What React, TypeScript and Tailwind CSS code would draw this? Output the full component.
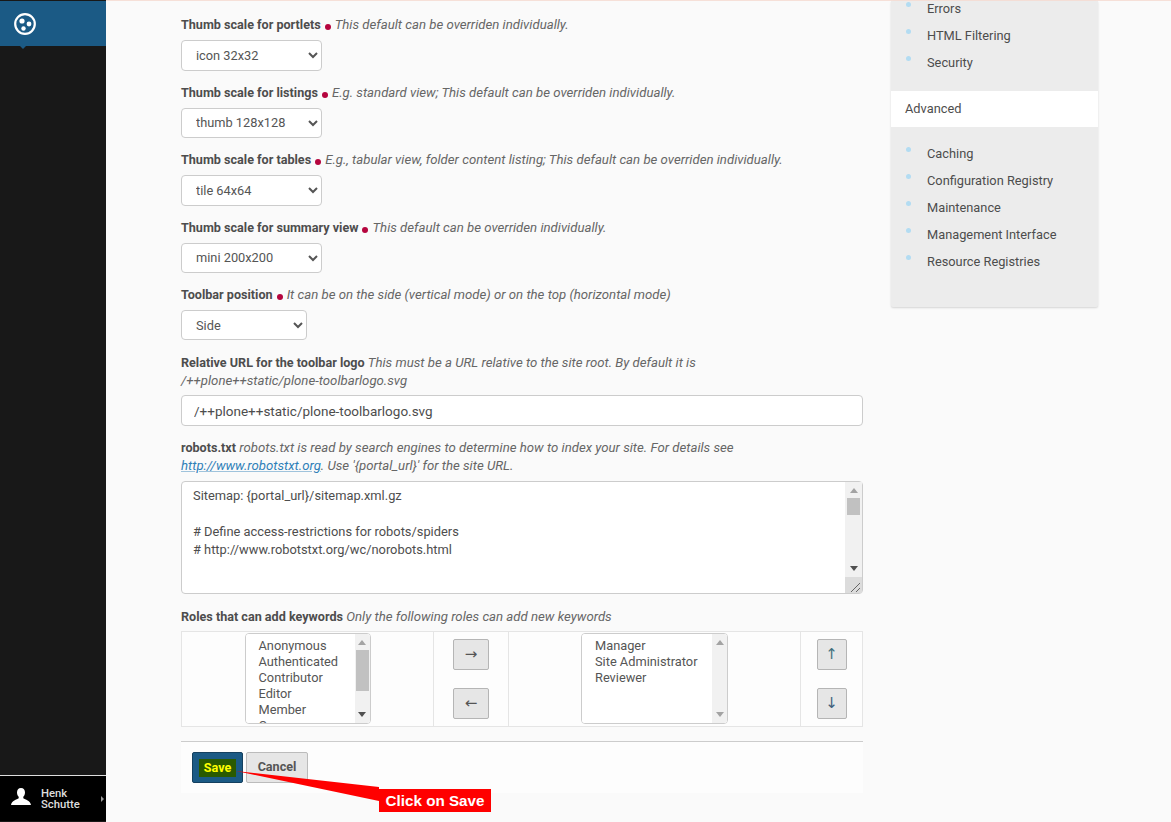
import React from 'react';

const robots = `Sitemap: {portal_url}/sitemap.xml.gz

# Define access-restrictions for robots/spiders
# http://www.robotstxt.org/wc/norobots.html



# By default we allow robots to access all areas of our site
# already accessible to anonymous users`;

const Dot = () => <span className="inline-block w-[6px] h-[6px] rounded-full bg-[#b5053e] mx-[4px] align-[-1px]" />;

const Label = ({ children }: { children: React.ReactNode }) => (
  <b className="font-bold text-[12.6px] text-[#4d4d4d]">{children}</b>
);

const Help = ({ children }: { children: React.ReactNode }) => (
  <i className="font-normal text-[13.2px] text-[#666]">{children}</i>
);

const ThumbField = ({ label, help, value }: { label: string; help: string; value: string }) => (
  <div className="mt-[12px] first:mt-[14px]">
    <div className="h-[20px] leading-[20px]">
      <Label>{label}</Label>
      <Dot />
      <Help>{help}</Help>
    </div>
    <select
      defaultValue={value}
      className="block mt-[5px] w-[141px] h-[30.5px] px-[10px] bg-white border border-[#ccc] rounded-[4px] text-[12.8px] text-[#555]"
      style={{ appearance: 'auto' }}
    >
      <option>{value}</option>
    </select>
  </div>
);

const SideLink = ({ text }: { text: string }) => (
  <li className="relative h-[27px] leading-[27px] pl-[36px] text-[12.8px] text-[#4d4d4d]">
    <span className="absolute left-[15px] top-[7px] w-[5px] h-[5px] rounded-full bg-[#b3dcf2]" />
    {text}
  </li>
);

const ArrowButton = ({ children, w }: { children: React.ReactNode; w: string }) => (
  <button className={`${w} h-[31px] flex items-center justify-center bg-[#e6e6e6] border border-[#b5b5b5] rounded-[2px] text-[#555] text-[15px] font-['DejaVu_Sans',sans-serif]`}>
    {children}
  </button>
);

// scrollbars are hidden in the capture, so the visible ones are drawn over the fields
const FakeScrollbar = ({ thumb, dim, box }: { thumb?: string; dim?: boolean; box: string }) => (
  <div className={`absolute ${box} bg-[#f1f1f1] flex flex-col items-center justify-between py-[6px]`}>
    <span className="w-0 h-0 border-x-[4px] border-b-[5px] border-x-transparent border-b-[#a3a3a3]" />
    {thumb && <span className={`absolute bg-[#c1c1c1] ${thumb}`} />}
    <span className={`w-0 h-0 border-x-[4px] border-t-[5px] border-x-transparent ${dim ? 'border-t-[#a3a3a3]' : 'border-t-[#505050]'}`} />
  </div>
);

const roleOption = "h-[16px] min-h-[16px] leading-[16px] p-0";

export default function App() {
  return (
    <div className="relative flex h-[822px] w-[1171px] overflow-hidden bg-[#fafafa] font-['Roboto',sans-serif] text-[12.8px] text-[#4d4d4d]">
      {/* toolbar */}
      <aside className="w-[106px] flex flex-col bg-[#181818] shrink-0">
        <div className="relative mt-[1px] h-[45px] bg-[#1b5a85] flex items-center pl-[14px]">
          <svg width="22" height="22" viewBox="0 0 22 22">
            <circle cx="11" cy="11" r="9.8" fill="none" stroke="#fff" strokeWidth="2.2" />
            <circle cx="8" cy="8" r="2.6" fill="#fff" />
            <circle cx="15" cy="11" r="2.4" fill="#fff" />
            <circle cx="9.500" cy="15.500" r="2.200" fill="#fff" />
          </svg>
          <span className="absolute left-[20px] top-[45px] w-0 h-0 border-x-[3px] border-t-[3px] border-x-transparent border-t-[#1b5a85]" />
        </div>
        <div className="flex-1" />
        <div className="h-[46px] mb-[1px] flex items-center bg-black border-t border-[#ddd] text-white">
          <svg width="20" height="17" viewBox="0 0 20 17" className="ml-[11px] mt-[-4px]">
            <path d="M10 0C7.400 0 6 2 6 4.500c0 1.800.7 3.300 1.700 4.200v1.500C5.800 11.400 .6 12.600 0 17h20c-.6-4.400-5.800-5.600-7.700-6.800V8.700c1-.9 1.700-2.400 1.700-4.200C14 2 12.600 0 10 0z" fill="#fff" />
          </svg>
          <div className="ml-[10px] text-[11.3px] font-medium leading-[11px] w-[60px] text-[#ddd]">
            <div>Henk</div>
            <div>Schutte</div>
          </div>
          <span className="w-0 h-0 border-y-[3px] border-l-[3px] border-y-transparent border-l-[#999]" />
        </div>
      </aside>

      <div className="flex-1 flex flex-col">
        <div className="h-[1px] bg-[#f6e0d8]" />
        <div className="flex">
          {/* form */}
          <main className="ml-[75px] w-[682px] shrink-0">
            <ThumbField label="Thumb scale for portlets" help="This default can be overriden individually." value="icon 32x32" />
            <ThumbField label="Thumb scale for listings" help="E.g. standard view; This default can be overriden individually." value="thumb 128x128" />
            <ThumbField label="Thumb scale for tables" help="E.g., tabular view, folder content listing; This default can be overriden individually." value="tile 64x64" />
            <ThumbField label="Thumb scale for summary view" help="This default can be overriden individually." value="mini 200x200" />

            <div className="mt-[12px]">
              <div className="h-[20px] leading-[20px]">
                <Label>Toolbar position</Label>
                <Dot />
                <Help>It can be on the side (vertical mode) or on the top (horizontal mode)</Help>
              </div>
              <select className="block mt-[5px] w-[126px] h-[30px] px-[10px] bg-white border border-[#ccc] rounded-[4px] text-[12.8px] text-[#555]" style={{ appearance: 'auto' }}>
                <option>Side</option>
              </select>
            </div>

            <div className="mt-[14px] leading-[18px]">
              <Label>Relative URL for the toolbar logo</Label>{' '}
              <Help>This must be a URL relative to the site root. By default it is<br /><span className="whitespace-nowrap">/++plone++static/plone-toolbarlogo.svg</span></Help>
            </div>
            <input
              readOnly
              value="/++plone++static/plone-toolbarlogo.svg"
              className="block mt-[5px] w-full h-[31px] px-[12px] bg-white border border-[#ccc] rounded-[4px] text-[13.5px] text-[#4d4d4d]"
            />

            <div className="mt-[13px] leading-[18px]">
              <Label>robots.txt</Label>{' '}
              <Help>
                robots.txt is read by search engines to determine how to index your site. For details see<br />
                <a className="text-[#2f7fb8] underline decoration-[#9fc3dc]">http://www.robotstxt.org</a>. Use '{'{portal_url}'}' for the site URL.
              </Help>
            </div>
            <div className="relative mt-[6px] h-[113px]">
              <textarea
                readOnly
                value={robots}
                className="block w-full h-full px-[11px] py-[5px] bg-white border border-[#ccc] rounded-[4px] text-[12.85px] leading-[18px] text-[#4d4d4d] resize-none overflow-hidden"
              />
              <FakeScrollbar box="right-[1px] top-[1px] bottom-[17px] w-[17px]" thumb="left-[2px] right-[2px] top-[16px] h-[17px]" />
              <div className="absolute right-[1px] bottom-[1px] w-[17px] h-[16px] bg-[#dcdcdc] overflow-hidden">
                <svg width="17" height="16" viewBox="0 0 17 16">
                  <path d="M6 15 L15 6 M11 15 L15 11" stroke="#666" strokeWidth="1" />
                </svg>
              </div>
            </div>

            <div className="mt-[14px] h-[18px] leading-[18px]">
              <Label>Roles that can add keywords</Label>{' '}
              <Help>Only the following roles can add new keywords</Help>
            </div>

            <div className="mt-[5px] h-[96px] flex border border-[#e5e5e5] bg-[#fdfdfd]">
              <div className="w-[251px] flex justify-center">
                <div className="relative w-[126px] h-[91px] mt-[1px] overflow-hidden bg-white border border-[#ccc] rounded-[4px]">
                  <select multiple className="w-full h-[100px] pl-[13px] pr-0 pt-[4px] bg-white text-[12.8px] leading-[16px] text-[#555] overflow-hidden outline-none" style={{ appearance: 'auto' }}>
                    {['Anonymous', 'Authenticated', 'Contributor', 'Editor', 'Member', 'Owner', 'Reader', 'Site Administrator'].map(r => <option key={r} className={roleOption}>{r}</option>)}
                  </select>
                  <FakeScrollbar box="right-0 top-0 bottom-0 w-[15px]" thumb="left-[1px] right-[1px] top-[16px] h-[41px]" />
                </div>
              </div>
              <div className="w-[75px] border-l border-[#e5e5e5] flex flex-col items-center justify-center gap-[18px]">
                <ArrowButton w="w-[36px]">→</ArrowButton>
                <ArrowButton w="w-[36px]">←</ArrowButton>
              </div>
              <div className="w-[292px] border-l border-[#e5e5e5] flex justify-center">
                <div className="relative w-[147px] h-[91px] mt-[1px] overflow-hidden bg-white border border-[#ccc] rounded-[4px]">
                  <select multiple className="w-full h-full pl-[13px] pr-0 pt-[4px] bg-white text-[12.8px] leading-[16px] text-[#555] overflow-hidden outline-none" style={{ appearance: 'auto' }}>
                    {['Manager', 'Site Administrator', 'Reviewer'].map(r => <option key={r} className={roleOption}>{r}</option>)}
                  </select>
                  <FakeScrollbar dim box="right-0 top-0 bottom-0 w-[15px]" />
                </div>
              </div>
              <div className="flex-1 border-l border-[#e5e5e5] flex flex-col items-center justify-center gap-[18px]">
                <ArrowButton w="w-[30px]"><span className="text-[#3f6f7c]">↑</span></ArrowButton>
                <ArrowButton w="w-[30px]"><span className="text-[#3f5f7c]">↓</span></ArrowButton>
              </div>
            </div>

            <div className="mt-[14px] h-[52px] bg-[#fdfdfd] border-t border-[#ccc] flex items-start pt-[10px] pl-[11px] gap-[3px]">
              <button className="w-[51px] h-[31px] flex items-center justify-center bg-[#1b5a85] border border-[#14405f] rounded-[2px]">
                <span className="px-[5px] h-[18px] leading-[18px] bg-[#2a5a00] text-[#ffff00] font-bold text-[12.6px]">Save</span>
              </button>
              <button className="w-[62px] h-[31px] bg-[#e6e6e6] border border-[#bbb] rounded-[2px] text-[#555] font-bold text-[12.6px]">Cancel</button>
            </div>
          </main>

          {/* control panel nav */}
          <nav className="ml-[28px] w-[207px] h-[306px] bg-[#ececec] shadow-[0_1px_2px_rgba(0,0,0,0.15)] rounded-b-[2px] shrink-0">
            <ul className="mt-[-6px]">
              {['Errors', 'HTML Filtering', 'Security'].map(t => <SideLink key={t} text={t} />)}
            </ul>
            <div className="mt-[15px] h-[36px] leading-[36px] pl-[14px] bg-white">Advanced</div>
            <ul className="mt-[13px]">
              {['Caching', 'Configuration Registry', 'Maintenance', 'Management Interface', 'Resource Registries'].map(t => <SideLink key={t} text={t} />)}
            </ul>
          </nav>
        </div>
      </div>

      {/* annotation */}
      <svg width="150" height="40" viewBox="0 0 150 40" className="absolute left-[232px] top-[765px]">
        <polygon points="4,6 147,22 147,36" fill="#ff0000" />
      </svg>
      <div className="absolute left-[379px] top-[789px] w-[112px] h-[23px] leading-[23px] bg-[#ff0000] text-white font-bold text-[15.2px] text-center font-['Liberation_Sans',sans-serif]">
        Click on Save
      </div>
    </div>
  );
}
